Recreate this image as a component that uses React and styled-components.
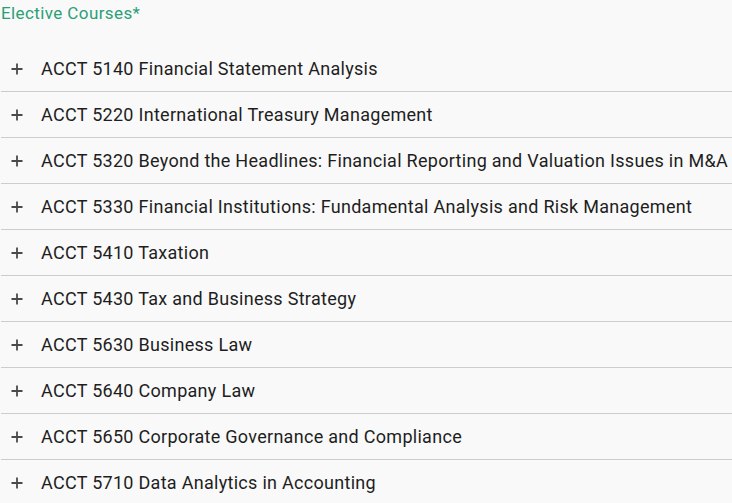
import React from "react";
import styled, { createGlobalStyle } from "styled-components";

const Global = createGlobalStyle`
  html, body { margin: 0; padding: 0; background: #f9f9f9; }
  body { font-family: Roboto, "Noto Sans", sans-serif; }
`;

const Wrap = styled.div`
  padding: 0 0 0 1px;
  width: 731px;
`;

const Heading = styled.div`
  font-size: 17px;
  letter-spacing: 0.4px;
  line-height: 26px;
  color: #2b9f77;
  margin-bottom: 20px;
`;

const List = styled.ul`
  list-style: none;
  margin: 0;
  padding: 0;
`;

const Row = styled.li`
  display: flex;
  align-items: center;
  height: 45px;
  border-bottom: 1px solid #cdcdcd;
`;

const Icon = styled.span`
  display: flex;
  width: 40px;
  padding-left: 10px;
  box-sizing: border-box;
  color: #4a4a4a;
`;

const Title = styled.span`
  font-size: 18px;
  letter-spacing: 0.29px;
  color: #1e1e1e;
  white-space: nowrap;
`;

const courses = [
  "ACCT 5140 Financial Statement Analysis",
  "ACCT 5220 International Treasury Management",
  "ACCT 5320 Beyond the Headlines: Financial Reporting and Valuation Issues in M&A",
  "ACCT 5330 Financial Institutions: Fundamental Analysis and Risk Management",
  "ACCT 5410 Taxation",
  "ACCT 5430 Tax and Business Strategy",
  "ACCT 5630 Business Law",
  "ACCT 5640 Company Law",
  "ACCT 5650 Corporate Governance and Compliance",
  "ACCT 5710 Data Analytics in Accounting",
];

const Plus = () => (
  <svg width="12" height="12" viewBox="0 0 12 12">
    <path d="M6 0.5V11.5M0.5 6H11.5" stroke="currentColor" strokeWidth="1.8" />
  </svg>
);

export default function App() {
  return (
    <Wrap>
      <Global />
      <Heading>Elective Courses*</Heading>
      <List>
        {courses.map((c) => (
          <Row key={c}>
            <Icon>
              <Plus />
            </Icon>
            <Title>{c}</Title>
          </Row>
        ))}
      </List>
    </Wrap>
  );
}
